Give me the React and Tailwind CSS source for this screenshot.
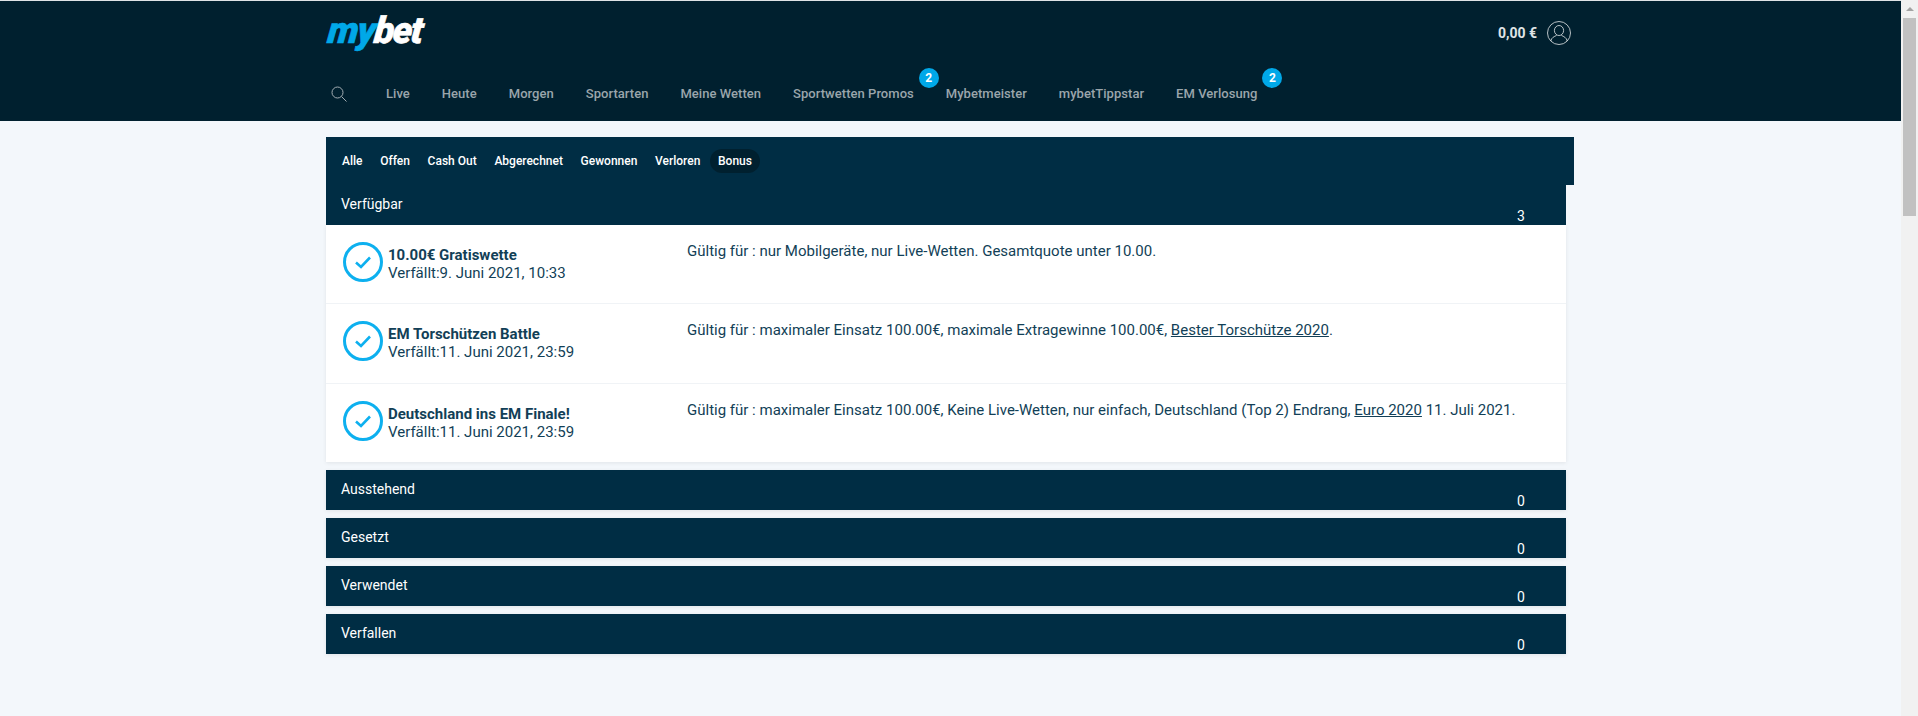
import React from 'react';

const navItems = [
  { label: 'Live' },
  { label: 'Heute' },
  { label: 'Morgen' },
  { label: 'Sportarten' },
  { label: 'Meine Wetten' },
  { label: 'Sportwetten Promos', badge: 2 },
  { label: 'Mybetmeister' },
  { label: 'mybetTippstar' },
  { label: 'EM Verlosung', badge: 2 },
];

const tabs = ['Alle', 'Offen', 'Cash Out', 'Abgerechnet', 'Gewonnen', 'Verloren', 'Bonus'];

const linkClass = 'underline';

const bonuses = [
  {
    title: '10.00€ Gratiswette',
    expires: 'Verfällt:9. Juni 2021, 10:33',
    height: 'h-[79px]',
    text: <>Gültig für : nur Mobilgeräte, nur Live-Wetten. Gesamtquote unter 10.00.</>,
  },
  {
    title: 'EM Torschützen Battle',
    expires: 'Verfällt:11. Juni 2021, 23:59',
    height: 'h-[80px]',
    text: (
      <>
        Gültig für : maximaler Einsatz 100.00€, maximale Extragewinne 100.00€,{' '}
        <span className={linkClass}>Bester Torschütze 2020</span>.
      </>
    ),
  },
  {
    title: 'Deutschland ins EM Finale!',
    expires: 'Verfällt:11. Juni 2021, 23:59',
    height: 'h-[78px]',
    text: (
      <>
        Gültig für : maximaler Einsatz 100.00€, Keine Live-Wetten, nur einfach, Deutschland (Top 2) Endrang,{' '}
        <span className={linkClass}>Euro 2020</span> 11. Juli 2021.
      </>
    ),
  },
];

const sections = ['Ausstehend', 'Gesetzt', 'Verwendet', 'Verfallen'];

const CheckIcon = () => (
  <svg viewBox="0 0 40 40" className="w-10 h-10 shrink-0" fill="none">
    <circle cx="20" cy="20" r="18.5" stroke="#0db0ef" strokeWidth="3" />
    <path d="M13 20.5l5 4.5 9-9.5" stroke="#0db0ef" strokeWidth="2.6" />
  </svg>
);

const UserIcon = () => (
  <svg viewBox="0 0 24 24" className="w-6 h-6" fill="none" stroke="#e4e8ea" strokeWidth="0.8">
    <circle cx="12" cy="12" r="11.5" />
    <ellipse cx="12" cy="9.5" rx="4.6" ry="5" />
    <path d="M3.8 20c.6-3.4 3.6-4.6 5.8-5.6M20.2 20c-.6-3.4-3.6-4.6-5.8-5.6" />
  </svg>
);

const SearchIcon = () => (
  <svg viewBox="0 0 16 16" className="w-4 h-4" fill="none" stroke="#a3adb3" strokeWidth="1">
    <circle cx="6.5" cy="6.5" r="5.5" />
    <path d="M10.5 10.5l5 5" />
  </svg>
);

const SectionHeader = ({ label, count, className }) => (
  <div className={`relative h-10 bg-[#002d44] pl-[15px] pt-[11px] text-[14px] leading-4 text-white ${className || ''}`}>
    {label}
    <span className="absolute left-[1191px] top-[23px]">{count}</span>
  </div>
);

const App = () => {
  return (
    <div className="flex h-[716px] overflow-hidden bg-[#f3f7fb] font-['Roboto',sans-serif]">
      <div className="flex-1 min-w-0">
        {/* Header */}
        <header className="h-[121px] border-t border-[#dfe3e6] bg-[#00202f]">
          <div className="pl-[326px] pr-[330px]">
            <div className="flex h-[73px] items-start justify-between">
              <div className="mt-[10px] origin-bottom-left -skew-x-6 text-[37px] leading-[40px] font-black italic tracking-[-1.6px]">
                <span className="text-[#00a8e8] [-webkit-text-stroke:0.6px_#00a8e8]">my</span>
                <span className="text-white [-webkit-text-stroke:0.6px_#ffffff]">bet</span>
              </div>
              <div className="mt-[20px] flex items-center gap-[10px]">
                <span className="text-[14px] font-bold text-[#dfe3e6]">0,00 €</span>
                <UserIcon />
              </div>
            </div>
            <nav className="flex items-center">
              <div className="ml-[5px] mr-[23px] mt-[-1px]">
                <SearchIcon />
              </div>
              {navItems.map((item) => (
                <a
                  key={item.label}
                  className="relative px-4 text-[13px] font-medium leading-[40px] tracking-[0.04px] text-[#9aa5ab]"
                >
                  {item.label}
                  {item.badge && (
                    <span className="absolute left-full top-[-6px] ml-[-11px] flex h-5 w-5 items-center justify-center rounded-full bg-[#00a8e8] text-[12px] font-bold text-white">
                      {item.badge}
                    </span>
                  )}
                </a>
              ))}
            </nav>
          </div>
        </header>

        <main className="pl-[326px] pt-4">
          {/* Tabs */}
          <div className="flex h-12 w-[1248px] items-center gap-[1.7px] bg-[#002d44] pl-2">
            {tabs.map((tab) => (
              <span
                key={tab}
                className={`flex h-6 items-center rounded-full px-2 text-[12px] font-medium text-white ${
                  tab === 'Bonus' ? 'bg-[#00202f]' : ''
                }`}
              >
                {tab}
              </span>
            ))}
          </div>

          <div className="w-[1240px]">
            <SectionHeader label="Verfügbar" count={3} />

            {/* Bonus list */}
            <div className="bg-white shadow-[0_1px_4px_rgba(0,0,0,0.08)]">
              {bonuses.map((bonus, i) => (
                <div
                  key={bonus.title}
                  className={`flex pl-[17px] text-[15px] text-[#123f57] ${bonus.height} ${
                    i < bonuses.length - 1 ? 'border-b border-[#f0f3f6]' : ''
                  }`}
                >
                  <div className="flex w-[344px] items-start gap-[5px] pt-[17px]">
                    <CheckIcon />
                    <div className="pt-[4px] leading-[18px]">
                      <p className="font-bold">{bonus.title}</p>
                      <p>{bonus.expires}</p>
                    </div>
                  </div>
                  <p className="pt-[17px] leading-[18px]">{bonus.text}</p>
                </div>
              ))}
            </div>

            <div className="mt-2 flex flex-col gap-2">
              {sections.map((s) => (
                <SectionHeader key={s} label={s} count={0} className="shadow-[0_1px_4px_rgba(0,0,0,0.08)]" />
              ))}
            </div>
          </div>
        </main>
      </div>

      {/* Scrollbar */}
      <div className="w-[17px] shrink-0 bg-[#f1f1f1] pt-[18px] relative">
        <div className="absolute left-[5px] top-[7px] h-0 w-0 border-x-[4px] border-b-[4px] border-x-transparent border-b-[#a3a3a3]" />
        <div className="mx-[2px] h-[198px] bg-[#c1c1c1]" />
      </div>
    </div>
  );
};

export default App;
